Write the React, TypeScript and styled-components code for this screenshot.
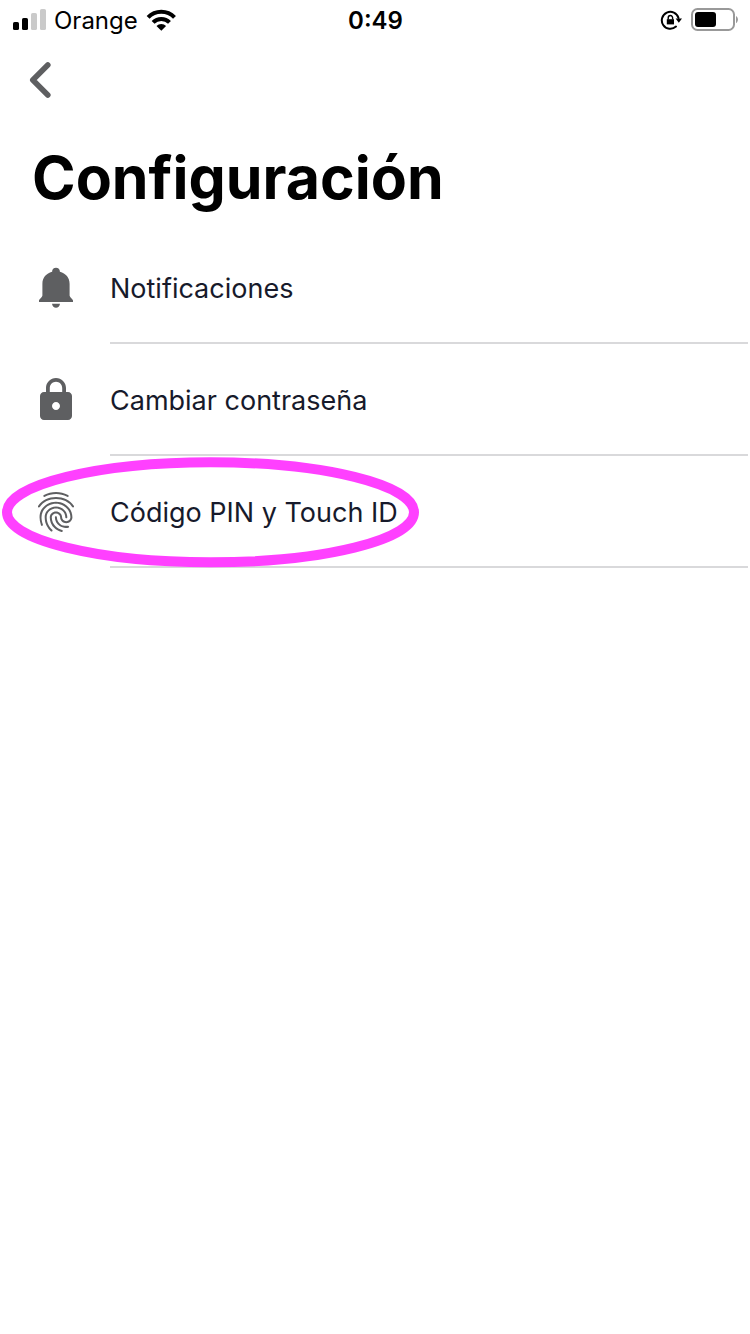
import React from "react";
import styled, { createGlobalStyle } from "styled-components";
import { MdFingerprint, MdLock } from "react-icons/md";

const GlobalStyle = createGlobalStyle`
  *, *::before, *::after { box-sizing: border-box; }
  body {
    margin: 0;
    background: #ffffff;
    font-family: Inter, "Liberation Sans", sans-serif;
  }
`;

const Screen = styled.div`
  min-height: 100vh;
  background: #ffffff;
  color: #000000;
`;

const StatusBar = styled.div`
  display: grid;
  grid-template-columns: 1fr auto 1fr;
  align-items: center;
  height: 40px;
  padding: 0 12px 0 13px;
  font-size: 24px;
  line-height: 32px;
`;

const StatusGroup = styled.div<{ $end?: boolean }>`
  display: flex;
  align-items: center;
  gap: 8px;
  justify-content: ${({ $end }) => ($end ? "flex-end" : "flex-start")};

  svg {
    display: block;
    flex: none;
  }
`;

const StatusText = styled.span`
  padding-top: 2px;
`;

const Time = styled.time`
  padding-top: 2px;
  font-weight: 600;
`;

const NavBar = styled.nav`
  display: flex;
  align-items: center;
  height: 80px;
  padding: 0 16px;
`;

const BackButton = styled.button`
  display: flex;
  align-items: center;
  justify-content: center;
  width: 48px;
  height: 48px;
  padding: 0;
  border: 0;
  background: none;
  cursor: pointer;
`;

const Title = styled.h1`
  margin: 18px 0 14px;
  padding: 0 32px;
  font-size: 59px;
  line-height: 80px;
  font-weight: 700;
`;

const List = styled.ul`
  margin: 0;
  padding: 0 2px 0 32px;
  list-style: none;
`;

const Item = styled.li`
  position: relative;
`;

const RowButton = styled.button`
  display: flex;
  align-items: center;
  gap: 30px;
  width: 100%;
  height: 112px;
  padding: 0;
  border: 0;
  background: none;
  color: #5e5f61;
  font-family: inherit;
  text-align: left;
  cursor: pointer;

  svg {
    flex: none;
  }
`;

const RowLabel = styled.span`
  display: flex;
  flex: 1;
  align-items: center;
  height: 100%;
  padding-top: 4px;
  border-bottom: 2px solid #d9d9db;
  color: #171a2b;
  font-size: 27px;
  line-height: 36px;
`;

const Highlight = styled.svg`
  position: absolute;
  top: 0;
  left: -32px;
  pointer-events: none;
`;

const SignalIcon = () => (
  <svg width="33" height="22" viewBox="0 0 33 22" aria-hidden="true">
    <rect x="0" y="13" width="6" height="8" rx="1.6" />
    <rect x="9" y="9" width="6" height="12" rx="1.6" />
    <rect x="18" y="4" width="6" height="17" rx="1.6" fill="#cacaca" />
    <rect x="27" y="0" width="6" height="21" rx="1.6" fill="#cacaca" />
  </svg>
);

const WifiIcon = () => (
  <svg width="30" height="22" viewBox="0 0 30 22" aria-hidden="true">
    <g fill="none" stroke="#000" strokeWidth="4">
      <path d="M2.100 8.400a18.200 18.200 0 0 1 26.400 0" />
      <path d="M7.100 13.400a11.400 11.400 0 0 1 16.400 0" />
    </g>
    <path d="M10.500 17a6.700 6.700 0 0 1 9.600 0L15.300 21.800z" />
  </svg>
);

const RotationLockIcon = () => (
  <svg width="22" height="22" viewBox="0 0 22 22" aria-hidden="true">
    <path
      d="M16 17.600a8.500 8.500 0 1 1 2.500-8.600"
      fill="none"
      stroke="#000"
      strokeWidth="2"
      strokeLinecap="round"
    />
    <path d="M15.600 9.500h6.400l-3.200 4.200z" />
    <path d="M6.800 10.200h7.200v5.200H6.800z" />
    <path d="M8.200 10.500V8.700a2.200 2.200 0 0 1 4.400 0V10.500" fill="none" stroke="#000" strokeWidth="1.400" />
  </svg>
);

const BatteryIcon = () => (
  <svg width="48" height="24" viewBox="0 0 48 24" aria-hidden="true">
    <rect x="2" y="1" width="42" height="21" rx="5.5" fill="none" stroke="#999" strokeWidth="2" />
    <rect x="5" y="4" width="21" height="15" rx="3" />
    <path d="M46 8c2.600 1.600 2.600 5.600 0 7.200z" fill="#999" />
  </svg>
);

const ChevronIcon = () => (
  <svg width="48" height="48" viewBox="0 0 48 48" aria-hidden="true">
    <path
      d="M31.800 9 16.800 24 31.800 39"
      fill="none"
      stroke="#5e5f61"
      strokeWidth="5.600"
      strokeLinecap="round"
      strokeLinejoin="round"
    />
  </svg>
);

const BellIcon = () => (
  <svg width="48" height="48" viewBox="0 0 48 48" fill="currentColor" aria-hidden="true">
    <path d="M24 3.700c-2.300 0-3.900 1.600-3.900 4C14.200 9.300 10.400 13.700 10.400 19.700V31.500C10.400 33 7 35.400 7 36.600V37.900H41V36.600C41 35.400 37.600 33 37.600 31.500V19.700C37.600 13.700 33.800 9.300 27.900 7.700 27.900 5.300 26.300 3.700 24 3.700z" />
    <path d="M20 39.700h8c-.4 2.600-2 4-4 4s-3.600-1.400-4-4z" />
  </svg>
);

const settings = [
  { label: "Notificaciones", icon: <BellIcon /> },
  { label: "Cambiar contraseña", icon: <MdLock size={48} aria-hidden="true" /> },
  {
    label: "Código PIN y Touch ID",
    icon: <MdFingerprint size={48} aria-hidden="true" />,
    highlighted: true,
  },
];

export default function App() {
  return (
    <Screen>
      <GlobalStyle />
      <StatusBar>
        <StatusGroup>
          <SignalIcon />
          <StatusText>Orange</StatusText>
          <WifiIcon />
        </StatusGroup>
        <Time>0:49</Time>
        <StatusGroup $end>
          <RotationLockIcon />
          <BatteryIcon />
        </StatusGroup>
      </StatusBar>
      <NavBar>
        <BackButton type="button" aria-label="Atrás">
          <ChevronIcon />
        </BackButton>
      </NavBar>
      <main>
        <Title>Configuración</Title>
        <List>
          {settings.map(({ label, icon, highlighted }) => (
            <Item key={label}>
              <RowButton type="button">
                {icon}
                <RowLabel>{label}</RowLabel>
              </RowButton>
              {highlighted && (
                <Highlight width="420" height="112" viewBox="0 0 420 112" aria-hidden="true">
                  <ellipse cx="210.500" cy="56.300" rx="203.500" ry="50" fill="none" stroke="#ff40ff" strokeWidth="10" />
                </Highlight>
              )}
            </Item>
          ))}
        </List>
      </main>
    </Screen>
  );
}
